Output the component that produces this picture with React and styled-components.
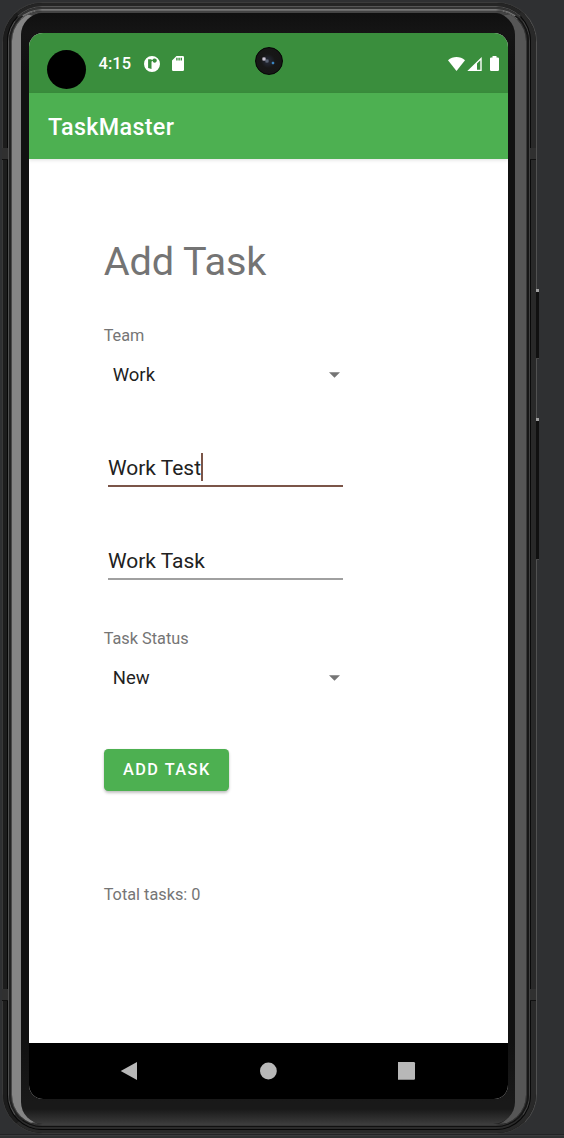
import React from 'react';
import styled, { createGlobalStyle } from 'styled-components';

const GlobalStyle = createGlobalStyle`
  * { box-sizing: border-box; }
  body { margin: 0; background: #2f3032; }
`;

const Desk = styled.main`
  width: 564px;
  height: 1138px;
  padding: 2px 0 0 2px;
  overflow: hidden;
  background: linear-gradient(#2f3032 0 1134px, #232325 1134px 1135px, #3b3c3e 1135px 1136px, #303132 1136px);
  font-family: Roboto, "Liberation Sans", sans-serif;
`;

const Ring = styled.div`
  width: ${(p) => p.$width || 'auto'};
  height: ${(p) => p.$height || '100%'};
  border-style: solid;
  border-width: ${(p) => p.$sides};
  border-color: ${(p) => p.$tones};
  border-radius: ${(p) => p.$radius}px;
  background: ${(p) => p.$fill || '#141414'};
`;

const Casing = styled(Ring)`
  position: relative;
`;

const SideKey = styled.i`
  position: absolute;
  right: -3px;
  top: ${(p) => p.$top}px;
  width: 3px;
  height: ${(p) => p.$length}px;
  border-top: 3px solid #a0a0a0;
  border-bottom: 1px solid #484848;
  background: #101010;
`;

const AntennaBand = styled.i`
  position: absolute;
  top: ${(p) => p.$top}px;
  ${(p) => (p.$right ? 'right: 0' : 'left: -1px')};
  width: 6px;
  height: 12px;
  background: #303030;
  border-bottom: 1px solid #111;
`;

const Bezel = styled.div`
  height: 100%;
  padding: 20px 7px 0 8px;
  border-radius: 22px;
  background: linear-gradient(#101010 0, #151515 20px, #111 60px, #111 1030px, #191919 1088px, #191919 1096px, #343434 1108px, #3c3c3c 1111px);
`;

const Screen = styled.div`
  position: relative;
  display: flex;
  flex-direction: column;
  width: 479px;
  height: 1066px;
  border-radius: 14px;
  overflow: hidden;
  background: #fff;
`;

const StatusBar = styled.header`
  display: flex;
  align-items: center;
  flex: none;
  height: 60px;
  padding: 1px 9px 0 69.5px;
  background: #3a8e3d;
  color: #fff;
`;

const Clock = styled.time`
  width: 45px;
  font-size: 16.4px;
  font-weight: 500;
  letter-spacing: 0.1px;
`;

const StatusIcon = styled.svg`
  display: block;
  flex: none;
  width: ${(p) => p.$w}px;
  height: ${(p) => p.$h}px;
  margin-left: ${(p) => p.$gap || 0}px;
  fill: currentColor;
`;

const Spacer = styled.span`
  flex: 1;
`;

const PunchHole = styled.i`
  position: absolute;
  left: 18px;
  top: 17px;
  width: 39px;
  height: 39px;
  border-radius: 50%;
  background: #000;
`;

const Lens = styled.i`
  position: absolute;
  left: 226px;
  top: 14px;
  width: 28px;
  height: 28px;
  border-radius: 50%;
  border: 1px solid #050505;
  background:
    radial-gradient(circle at 8px 11px, #c9c4d4 0 1px, transparent 2.5px),
    radial-gradient(circle at 11px 13px, #596273 0 1px, transparent 2.5px),
    radial-gradient(circle at 17px 15px, #3e8fd0 0 0.6px, transparent 1.8px),
    radial-gradient(circle at 12px 13px, #20232d 0 3px, #171717 7px, #161616 12px);
`;

const AppBar = styled.div`
  position: relative;
  display: flex;
  align-items: center;
  flex: none;
  height: 66px;
  padding: 2px 19px 0;
  background: #4db051;
  color: #fff;
  box-shadow: 0 1px 4px rgba(0, 0, 0, 0.13);
  font-size: 23.3px;
  font-weight: 500;
  letter-spacing: 0.35px;
`;

const Form = styled.section`
  display: flex;
  flex-direction: column;
  align-items: flex-start;
  flex: 1;
  padding: 79px 0 0 74.7px;
`;

const Title = styled.h1`
  margin: 0;
  color: #747474;
  font-size: 39.7px;
  font-weight: 400;
  line-height: 48px;
  letter-spacing: -0.1px;
`;

const Caption = styled.div`
  margin-top: ${(p) => p.$gap}px;
  color: #757575;
  font-size: 16.3px;
  line-height: 20px;
`;

const Spinner = styled.div`
  display: flex;
  align-items: center;
  justify-content: space-between;
  width: 236.3px;
  height: 28px;
  margin-top: 15px;
  padding-left: 9px;
  color: #1f1f1f;
  font-size: 18.5px;
`;

const Caret = styled.svg`
  width: 11px;
  height: 6px;
  fill: #757575;
`;

const Field = styled.div`
  display: flex;
  align-items: center;
  width: 235px;
  height: ${(p) => (p.$focused ? 35 : 34)}px;
  margin: ${(p) => p.$gap}px 0 0 4.3px;
  padding-bottom: ${(p) => (p.$focused ? 1 : 3)}px;
  border-bottom: 2px solid ${(p) => (p.$focused ? '#7b5548' : '#a0a0a0')};
  color: #212121;
  font-size: 20.97px;
`;

const TextCursor = styled.i`
  width: 2px;
  height: 28px;
  margin-bottom: 2px;
  background: #7b5548;
`;

const Submit = styled.button`
  width: 125.3px;
  height: 42.3px;
  margin: 56.7px 0 0;
  padding: 0 0 0 1px;
  border: 0;
  border-radius: 4.5px;
  background: #4db051;
  color: #fff;
  box-shadow: 0 2px 3px rgba(0, 0, 0, 0.24), 0 0 1px rgba(0, 0, 0, 0.15);
  font: 500 16.3px Roboto, sans-serif;
  letter-spacing: 1.5px;
`;

const NavBar = styled.nav`
  display: flex;
  align-items: center;
  flex: none;
  height: 56px;
  padding-left: 91px;
  gap: 121px;
  background: #000;
`;

const NavIcon = styled.svg`
  width: 18px;
  height: 18px;
  fill: #b8b8b8;
`;

const Dropdown = ({ children }) => (
  <Spinner>
    <span>{children}</span>
    <Caret viewBox="0 0 11 6"><path d="M0 .2h11L5.5 5.8z" /></Caret>
  </Spinner>
);

const Phone = ({ children }) => (
  <Casing $width="535px" $height="1132px" $sides="1px" $tones="#3c3c3c #515151 #393939 #393939" $radius={40} $fill="#111">
    <Ring $sides="3px 5px 3px 4px" $tones="#252525 #292929 #292929 #1c1c1c" $radius={39}>
      <Ring $sides="1px" $tones="#555 #090909 #080808 #070707" $radius={35}>
        <Ring $sides="2px 1px 2px 1px" $tones="#343434 #424242 #2b2b2b #505050" $radius={34}>
          <Ring $sides="1px 2px 1px 2px" $tones="#777 #171717 #101010 #222" $radius={33}>
            <Ring $sides="1px" $tones="#686868 #373737 #353535 #484848" $radius={31}>
              <Ring $sides="2px 11px 1px 9px" $tones="#444 #565656 #3d3d3d #858585" $radius={30}>
                {children}
              </Ring>
            </Ring>
          </Ring>
        </Ring>
      </Ring>
    </Ring>
    <AntennaBand $top={145} />
    <AntennaBand $top={145} $right />
    <AntennaBand $top={986} />
    <AntennaBand $top={986} $right />
    <SideKey $top={286} $length={70} />
    <SideKey $top={415} $length={142} />
  </Casing>
);

export default function App() {
  return (
    <Desk>
      <GlobalStyle />
      <Phone>
        <Bezel>
          <Screen>
            <StatusBar>
              <Clock>4:15</Clock>
              <StatusIcon viewBox="0 0 16 16" $w={16} $h={16}>
                <path fillRule="evenodd" d="M8 0a8 8 0 1 1 0 16A8 8 0 0 1 8 0M4.1 3.2v8.7l3.4 1.2V6.4c0-1 .4-1.5 1.1-1.6.2 1.2 1 1.9 2.1 1.9 1.2 0 2.1-.9 2.1-2.1s-.9-2.1-2.1-2.1c-1 0-1.7.5-2 1.3-.6 0-.9.1-1.2.4V3.2z" />
              </StatusIcon>
              <StatusIcon viewBox="0 0 12 15" $w={12} $h={15} $gap={12}>
                <path fillRule="evenodd" d="M4.5 0H10.7Q12 0 12 1.3v12.4Q12 15 10.7 15H1.3Q0 15 0 13.7V4.5zM4.2 1.8v2.7h1.4V1.8zM6.4 1.8v2.7h1.4V1.8zM8.6 1.8v2.7H10V1.8z" />
              </StatusIcon>
              <Spacer />
              <StatusIcon viewBox="0 0 17 14" $w={17} $h={14}>
                <path d="M0 3.2C4.8-1 12.2-1 17 3.2L8.5 14z" />
              </StatusIcon>
              <StatusIcon viewBox="0 0 15 14" $w={15} $h={14} $gap={2}>
                <path fillRule="evenodd" d="M14.7 0v14H.3zM10 6.4V12.8H13.3V3.2z" />
              </StatusIcon>
              <StatusIcon viewBox="0 0 9 15" $w={9} $h={15} $gap={8}>
                <path d="M2.5 0h4v1.4h1.3Q9 1.4 9 2.6v11.2Q9 15 7.8 15H1.2Q0 15 0 13.8V2.6Q0 1.4 1.2 1.4h1.3z" />
              </StatusIcon>
              <PunchHole />
              <Lens />
            </StatusBar>
            <AppBar>TaskMaster</AppBar>
            <Form>
              <Title>Add Task</Title>
              <Caption $gap={40}>Team</Caption>
              <Dropdown>Work</Dropdown>
              <Field $focused $gap={63}>Work Test<TextCursor /></Field>
              <Field $gap={59}>Work Task</Field>
              <Caption $gap={49}>Task Status</Caption>
              <Dropdown>New</Dropdown>
              <Submit type="button">ADD TASK</Submit>
              <Caption $gap={94}>Total tasks: 0</Caption>
            </Form>
            <NavBar>
              <NavIcon viewBox="0 0 18 18"><path d="M.7 9 17 0v18z" /></NavIcon>
              <NavIcon viewBox="0 0 18 18"><circle cx="9.4" cy="9" r="8.4" /></NavIcon>
              <NavIcon viewBox="0 0 18 18"><rect x="-.6" width="17.6" height="17.8" rx="1.2" /></NavIcon>
            </NavBar>
          </Screen>
        </Bezel>
      </Phone>
    </Desk>
  );
}
